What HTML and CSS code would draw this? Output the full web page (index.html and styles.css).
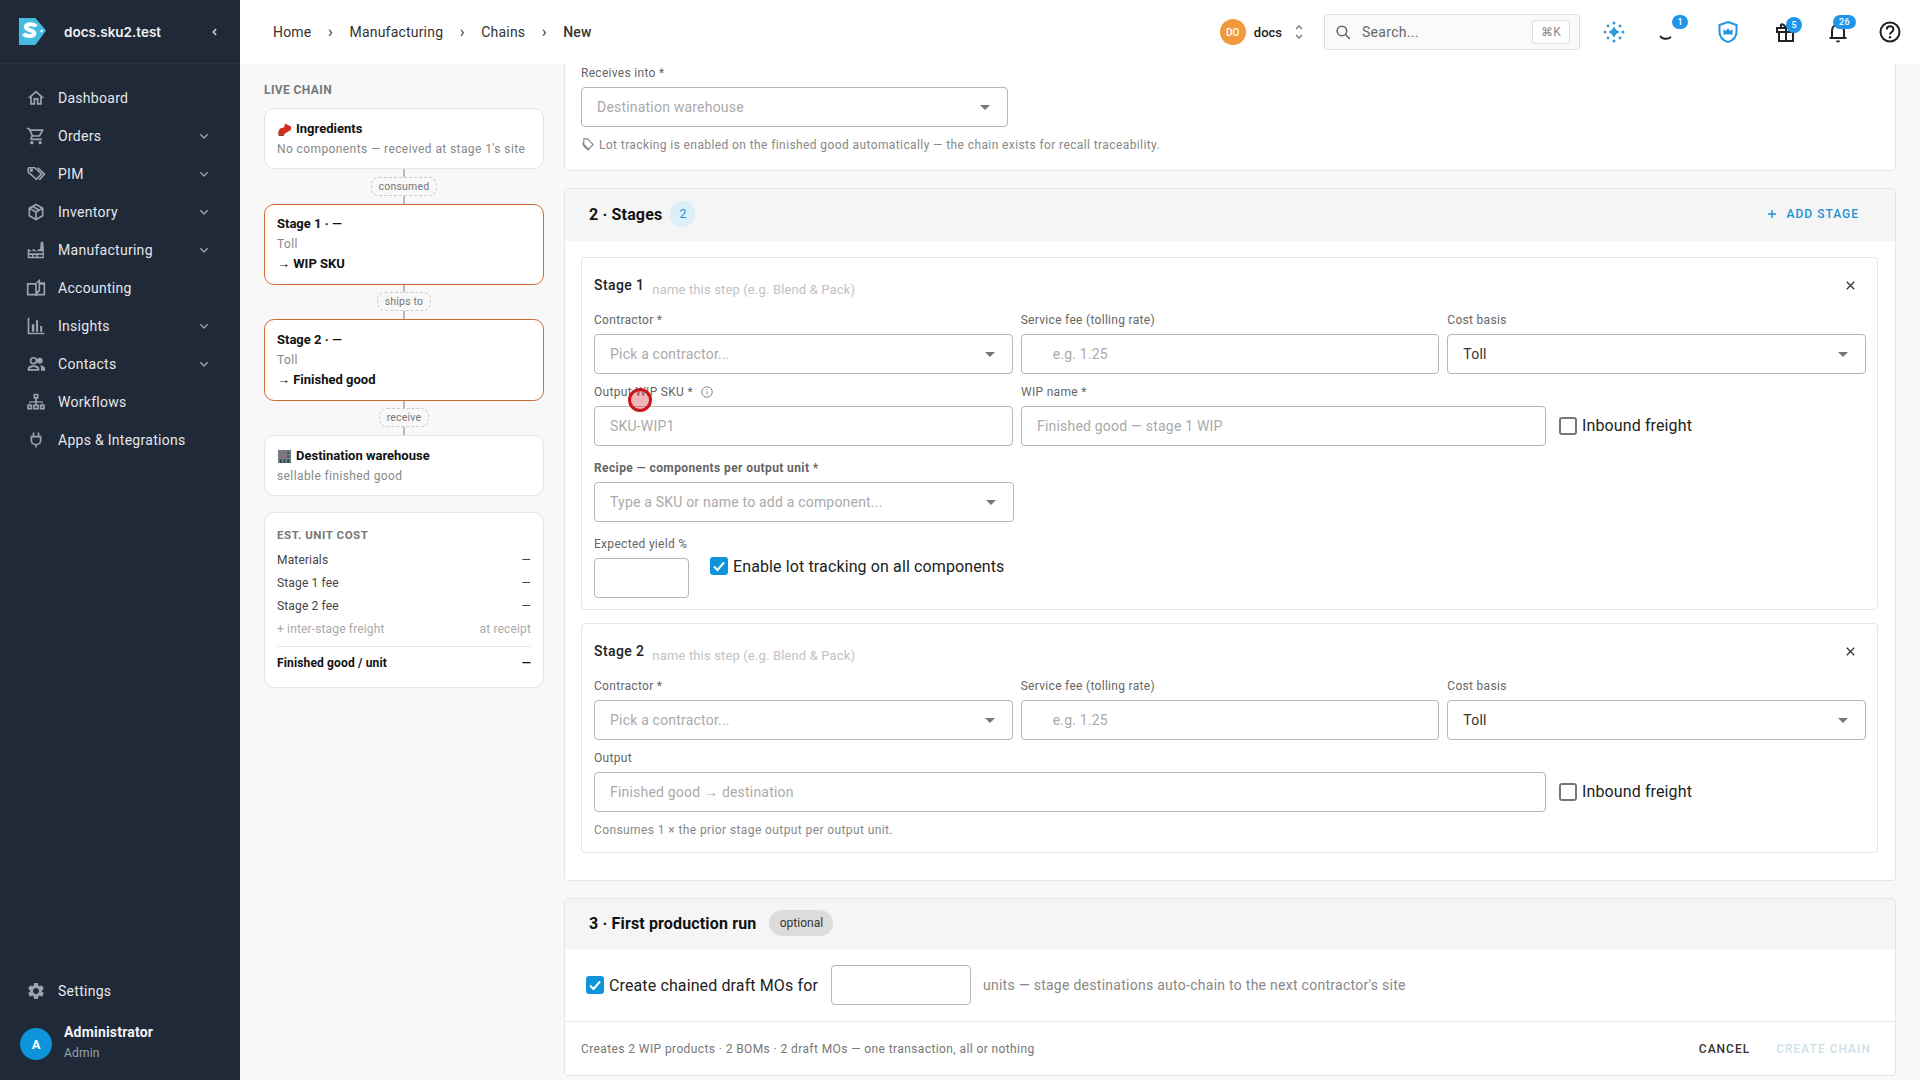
FILE: index.html
```html
<!DOCTYPE html>
<html>

<head>
    <meta charset="utf-8">
    <title>New Chain</title>
    <link rel="stylesheet" href="styles.css">
</head>

<body>
    <svg class="defs" width="0" height="0">
        <symbol id="chev" viewBox="0 0 24 24"><path d="M6.5 9.5l5.500 5.500 5.500-5.500" fill="none" stroke="currentColor" stroke-width="2"/></symbol>
        <symbol id="caret" viewBox="0 0 24 24"><path d="M7 10l5 5 5-5z" fill="currentColor"/></symbol>
    </svg>
    <div class="app">
        <aside class="sidebar">
            <div class="brand">
                <svg class="logo" viewBox="0 0 30 30">
                    <path d="M1 1h17l11 13-11 15H1z" fill="#45bbe0"/>
                    <circle cx="24.500" cy="14.500" r="1.300" fill="#fff"/>
                    <path d="M18.500 10c-1.500-3-9.500-3.500-10.500 0s9.500 3.500 9 7c-.5 3.500-9 3.500-11 0" fill="none" stroke="#fff" stroke-width="4.200"/>
                </svg>
                <span class="brand_name">docs.sku2.test</span>
                <svg class="brand_back" viewBox="0 0 24 24"><path d="M14 7l-5 5 5 5" fill="none" stroke="currentColor" stroke-width="2.400"/></svg>
            </div>
            <nav class="nav">
                <a class="nav_item"><svg class="nav_icon" viewBox="0 0 24 24"><path d="M12 5.690l5 4.500V18h-2v-6H9v6H7v-7.810l5-4.500M12 3L2 12h3v8h6v-6h2v6h6v-8h3L12 3z"/></svg>Dashboard</a>
                <a class="nav_item"><svg class="nav_icon" viewBox="0 0 24 24"><path d="M15.550 13c.75 0 1.410-.41 1.750-1.030l3.580-6.490c.37-.66-.11-1.480-.87-1.480H5.210l-.94-2H1v2h2l3.600 7.590-1.350 2.440C4.520 15.370 5.480 17 7 17h12v-2H7l1.100-2h7.450zM6.160 6h12.150l-2.760 5H8.530L6.160 6zM7 18c-1.100 0-1.990.9-1.990 2S5.900 22 7 22s2-.9 2-2-.9-2-2-2zm10 0c-1.100 0-1.990.9-1.990 2s.89 2 1.990 2 2-.9 2-2-.9-2-2-2z"/></svg>Orders<svg class="nav_chev"><use href="#chev"/></svg></a>
                <a class="nav_item"><svg class="nav_icon line" viewBox="0 0 24 24"><path d="M2.500 6.500l1-2h7l8 7.500-6 6.500-9.500-8.500z"/><path d="M14 4.500l8 7.500-6 7"/><circle cx="6.500" cy="7.500" r="1"/></svg>PIM<svg class="nav_chev"><use href="#chev"/></svg></a>
                <a class="nav_item"><svg class="nav_icon line" viewBox="0 0 24 24"><path d="M12 3l8 4.500v9L12 21l-8-4.500v-9z"/><path d="M4 7.500l8 4.500 8-4.500M12 12v9M8 5.300l8 4.500"/></svg>Inventory<svg class="nav_chev"><use href="#chev"/></svg></a>
                <a class="nav_item"><svg class="nav_icon" viewBox="0 0 24 24"><path d="M2 22V10.500l6 3v-3l6 3V11h3l.7-9h3l.8 9v11zM4 14.500V16h16v-2.500H4zM4 18v2h3v-2zm5 0v2h3v-2zm5 0v2h3v-2zM17 18v2h3v-2z" fill-rule="evenodd"/></svg>Manufacturing<svg class="nav_chev"><use href="#chev"/></svg></a>
                <a class="nav_item"><svg class="nav_icon" viewBox="0 0 24 24"><path d="M1 6h9.500c.7 0 1.100.4 1.500.8V5.500L17 1v4h5.500c.3 0 .5.200.5.500V21h-9c-1 0-1.500.8-2 1-.5-.2-1-1-2-1H1zm2 2v11h8V9c0-.5-.5-1-1-1zm11-2.500l-1 1V16l2-1.700V5.500zm3 2.500v7.500L13.500 19H21V8z" fill-rule="evenodd"/></svg>Accounting</a>
                <a class="nav_item"><svg class="nav_icon" viewBox="0 0 24 24"><path d="M2 2h2v18h18v2H2zM7 10h3v9H7zM12 5h2.500v14H12zM17 12h2.500v7H17z"/></svg>Insights<svg class="nav_chev"><use href="#chev"/></svg></a>
                <a class="nav_item"><svg class="nav_icon" viewBox="0 0 24 24"><circle cx="9" cy="8" r="3.500" fill="none" stroke="currentColor" stroke-width="2"/><circle cx="16.500" cy="8" r="3.500"/><path d="M2 20v-2.500c0-2.500 3.500-4 7-4s7 1.500 7 4V20zm2-2h10c-.3-1-2.500-2.500-5-2.500s-4.700 1.500-5 2.500zM17 13.500c3 .2 6 1.500 6 4V20h-5v-3c0-1.500-.5-2.500-1-3.500z" fill-rule="evenodd"/></svg>Contacts<svg class="nav_chev"><use href="#chev"/></svg></a>
                <a class="nav_item"><svg class="nav_icon" viewBox="0 0 24 24"><path d="M9 2h6v6h-2v3h7v4h2.500v6h-6v-6H19v-2.500h-6V15h2.500v6h-7v-6H11v-2.500H5V15h2.500v6h-6v-6H4v-4h7V8H9zm2 2v2h2V4zM3.500 17v2h2v-2zm7 0v2h3v-2zm8 0v2h2v-2z" fill-rule="evenodd"/></svg>Workflows</a>
                <a class="nav_item"><svg class="nav_icon line" viewBox="0 0 24 24"><path d="M9 3v5M15 3v5M6.500 8h11v4.500c0 3-2.500 5-5.500 5s-5.500-2-5.500-5zM12 17.500V21"/></svg>Apps &amp; Integrations</a>
            </nav>
            <a class="nav_item nav_settings"><svg class="nav_icon" viewBox="0 0 24 24"><path d="M19.140 12.940c.04-.3.06-.61.06-.94 0-.32-.02-.64-.07-.94l2.030-1.580c.18-.14.23-.41.12-.61l-1.920-3.320c-.12-.22-.37-.29-.59-.22l-2.390.96c-.5-.38-1.030-.7-1.620-.94l-.36-2.540c-.04-.24-.24-.41-.48-.41h-3.840c-.24 0-.43.17-.47.41l-.36 2.540c-.59.24-1.130.57-1.620.94l-2.390-.96c-.22-.08-.47 0-.59.22L2.740 8.870c-.12.21-.08.47.12.61l2.030 1.580c-.05.3-.09.63-.09.94s.02.64.07.94l-2.030 1.580c-.18.14-.23.41-.12.61l1.920 3.320c.12.22.37.29.59.22l2.390-.96c.5.38 1.030.7 1.620.94l.36 2.540c.05.24.24.41.48.41h3.840c.24 0 .44-.17.47-.41l.36-2.540c.59-.24 1.130-.56 1.620-.94l2.390.96c.22.08.47 0 .59-.22l1.920-3.320c.12-.22.07-.47-.12-.61l-2.010-1.580zM12 15.600c-1.980 0-3.600-1.620-3.600-3.600s1.620-3.600 3.600-3.600 3.600 1.620 3.600 3.600-1.620 3.600-3.600 3.600z"/></svg>Settings</a>
            <div class="user">
                <span class="user_avatar">A</span>
                <div>
                    <div class="user_name">Administrator</div>
                    <div class="user_role">Admin</div>
                </div>
            </div>
        </aside>

        <div class="page">
            <header class="topbar">
                <div class="crumbs">
                    <span>Home</span><i>›</i><span>Manufacturing</span><i>›</i><span>Chains</span><i>›</i><span class="crumb_now">New</span>
                </div>
                <div class="tenant">
                    <span class="tenant_avatar">DO</span>
                    <span class="tenant_name">docs</span>
                    <svg class="tenant_arrows" viewBox="0 0 12 20"><path d="M3 7l3-3 3 3M3 13l3 3 3-3" fill="none" stroke="currentColor" stroke-width="1.300"/></svg>
                </div>
                <div class="search">
                    <svg class="search_icon" viewBox="0 0 24 24"><circle cx="10" cy="10" r="6" fill="none" stroke="currentColor" stroke-width="2"/><path d="M14.500 14.500L20 20" stroke="currentColor" stroke-width="2"/></svg>
                    <span class="search_text">Search...</span>
                    <span class="search_key">⌘K</span>
                </div>
                <div class="tools">
                    <span class="tool">
                        <svg viewBox="0 0 24 24" fill="#2f9bdc"><path d="M12 6.500l2.200 3.300 3.300 2.200-3.300 2.200-2.200 3.300-2.200-3.300L6.500 12l3.300-2.200z"/><circle cx="12" cy="3" r="1.500"/><circle cx="12" cy="21" r="1.500"/><circle cx="3" cy="12" r="1.500"/><circle cx="21" cy="12" r="1.500"/><circle cx="6" cy="6" r="1.400"/><circle cx="18" cy="6" r="1.400"/><circle cx="6" cy="18" r="1.400"/><circle cx="18" cy="18" r="1.400"/></svg>
                    </span>
                    <span class="tool">
                        <svg viewBox="0 0 24 24"><path d="M6 16c2 3 7 4 11 1" fill="none" stroke="#222" stroke-width="2"/></svg>
                        <b class="badge">1</b>
                    </span>
                    <span class="tool">
                        <svg viewBox="0 0 24 24"><path d="M12 2l8.500 3v6.500c0 5-3.500 9-8.500 10.500-5-1.500-8.500-5.500-8.500-10.500V5z" fill="none" stroke="#2196e0" stroke-width="2"/><path d="M7.500 9l2.500 2 2-3 2 3 2.500-2v5.500h-9z" fill="#2196e0"/></svg>
                    </span>
                    <span class="tool">
                        <svg viewBox="0 0 24 24" fill="none" stroke="#222" stroke-width="2"><path d="M3 8h18v4H3zM5 12v9h14v-9M12 8v13M8 8C5 5 8 1.500 12 8c4-6.500 7-3 4 0"/></svg>
                        <b class="badge badge_gift">5</b>
                    </span>
                    <span class="tool">
                        <svg viewBox="0 0 24 24"><path d="M6 18v-7c0-4 2.500-6.500 6-6.500s6 2.500 6 6.500v7M3.500 18h17" fill="none" stroke="#222" stroke-width="2"/><path d="M10 20.500h4a2 2 0 0 1-4 0z" fill="#222"/></svg>
                        <b class="badge badge_wide">26</b>
                    </span>
                    <span class="tool">
                        <svg viewBox="0 0 24 24"><circle cx="12" cy="12" r="9.500" fill="none" stroke="#222" stroke-width="2"/><path d="M8.800 9.500c0-4.200 6.600-4.200 6.600 0 0 2.500-3.400 2.500-3.400 5" fill="none" stroke="#222" stroke-width="2"/><circle cx="12" cy="17.300" r="1.200" fill="#222"/></svg>
                    </span>
                </div>
            </header>

            <div class="content">
                <div class="chain">
                    <h4 class="chain_title">LIVE CHAIN</h4>
                    <div class="node">
                        <div class="node_head">
                            <svg class="emoji" viewBox="0 0 16 16"><path d="M1 11.500l2-4.500 4-1 2-4.500 6 3.500c.5 1.500 0 3-1 4l-6 3.500H3z" fill="#d4301f"/><path d="M1 12h7.500L7 15H2z" fill="#a33a30"/></svg>
                            Ingredients
                        </div>
                        <div class="node_sub">No components — received at stage 1's site</div>
                    </div>
                    <div class="link"><span>consumed</span></div>
                    <div class="node node_stage">
                        <div class="node_head">Stage 1 · —</div>
                        <div class="node_sub">Toll</div>
                        <div class="node_head">→ WIP SKU</div>
                    </div>
                    <div class="link link_short"><span>ships to</span></div>
                    <div class="node node_stage">
                        <div class="node_head">Stage 2 · —</div>
                        <div class="node_sub">Toll</div>
                        <div class="node_head">→ Finished good</div>
                    </div>
                    <div class="link link_short"><span>receive</span></div>
                    <div class="node">
                        <div class="node_head">
                            <svg class="emoji" viewBox="0 0 16 16"><path d="M1 1h14v14H1z" fill="#6f8088"/><path d="M3 3h2v2H3zM7 3h2v2H7zM3 7h2v2H3zM7 7h2v2H7z" fill="#c8506a"/><path d="M11 3h2v2h-2zM11 7h2v2h-2zM3 11h2v4H3zM7 11h2v4H7zM11 11h2v4h-2z" fill="#33424a"/></svg>
                            Destination warehouse
                        </div>
                        <div class="node_sub">sellable finished good</div>
                    </div>
                    <div class="cost">
                        <div class="cost_title">EST. UNIT COST</div>
                        <div class="cost_row"><span>Materials</span><span>—</span></div>
                        <div class="cost_row"><span>Stage 1 fee</span><span>—</span></div>
                        <div class="cost_row"><span>Stage 2 fee</span><span>—</span></div>
                        <div class="cost_row cost_muted"><span>+ inter-stage freight</span><span>at receipt</span></div>
                        <div class="cost_row cost_total"><span>Finished good / unit</span><span>—</span></div>
                    </div>
                </div>

                <div class="form">
                    <section class="card card_cut">
                        <label class="label">Receives into *</label>
                        <div class="input select_short"><span>Destination warehouse</span><svg class="caret"><use href="#caret"/></svg></div>
                        <div class="hint hint_lot">
                            <svg class="hint_icon" viewBox="0 0 16 16"><path d="M3 2h4l6 6-5 5-5-5zM2 5.500c0 4 3 7 7 8.500" fill="none" stroke="currentColor" stroke-width="1.200"/></svg>
                            Lot tracking is enabled on the finished good automatically — the chain exists for recall traceability.
                        </div>
                    </section>

                    <section class="card">
                        <div class="card_head">
                            <h3>2 · Stages</h3>
                            <span class="pill pill_blue">2</span>
                            <a class="add_stage"><svg viewBox="0 0 24 24"><path d="M12 5v14M5 12h14" stroke="currentColor" stroke-width="2.400"/></svg>ADD STAGE</a>
                        </div>
                        <div class="stages">
                            <div class="stage">
                                <div class="stage_head">
                                    <span class="stage_name">Stage 1</span>
                                    <span class="stage_hint">name this step (e.g. Blend &amp; Pack)</span>
                                    <svg class="stage_close" viewBox="0 0 24 24"><path d="M6 6l12 12M18 6L6 18" stroke="currentColor" stroke-width="2"/></svg>
                                </div>
                                <div class="row_three">
                                    <div><label class="label">Contractor *</label><div class="input"><span>Pick a contractor...</span><svg class="caret"><use href="#caret"/></svg></div></div>
                                    <div><label class="label">Service fee (tolling rate)</label><div class="input input_fee"><span>e.g. 1.25</span></div></div>
                                    <div><label class="label">Cost basis</label><div class="input input_value"><span>Toll</span><svg class="caret"><use href="#caret"/></svg></div></div>
                                </div>
                                <div class="row_wip">
                                    <div>
                                        <label class="label">Output WIP SKU * <svg class="info" viewBox="0 0 16 16"><circle cx="8" cy="8" r="6" fill="none" stroke="currentColor"/><path d="M8 7v4M8 4.500v1.200" stroke="currentColor"/></svg></label>
                                        <div class="input"><span>SKU-WIP1</span></div>
                                    </div>
                                    <div><label class="label">WIP name *</label><div class="input"><span>Finished good — stage 1 WIP</span></div></div>
                                    <div class="check check_free"><span class="box"></span>Inbound freight</div>
                                </div>
                                <label class="label label_bold">Recipe — components per output unit *</label>
                                <div class="input select_recipe"><span>Type a SKU or name to add a component...</span><svg class="caret"><use href="#caret"/></svg></div>
                                <div class="row_yield">
                                    <div><label class="label">Expected yield %</label><div class="input input_yield"></div></div>
                                    <div class="check"><span class="box box_on"><svg viewBox="0 0 18 18"><path d="M4 9.500l3.500 3.500L14 5.500" fill="none" stroke="#fff" stroke-width="2"/></svg></span>Enable lot tracking on all components</div>
                                </div>
                            </div>

                            <div class="stage">
                                <div class="stage_head">
                                    <span class="stage_name">Stage 2</span>
                                    <span class="stage_hint">name this step (e.g. Blend &amp; Pack)</span>
                                    <svg class="stage_close" viewBox="0 0 24 24"><path d="M6 6l12 12M18 6L6 18" stroke="currentColor" stroke-width="2"/></svg>
                                </div>
                                <div class="row_three">
                                    <div><label class="label">Contractor *</label><div class="input"><span>Pick a contractor...</span><svg class="caret"><use href="#caret"/></svg></div></div>
                                    <div><label class="label">Service fee (tolling rate)</label><div class="input input_fee"><span>e.g. 1.25</span></div></div>
                                    <div><label class="label">Cost basis</label><div class="input input_value"><span>Toll</span><svg class="caret"><use href="#caret"/></svg></div></div>
                                </div>
                                <div class="row_output">
                                    <div><label class="label">Output</label><div class="input"><span>Finished good → destination</span></div></div>
                                    <div class="check check_free"><span class="box"></span>Inbound freight</div>
                                </div>
                                <div class="hint hint_stage">Consumes 1 × the prior stage output per output unit.</div>
                            </div>
                        </div>
                    </section>

                    <section class="card">
                        <div class="card_head card_head_run">
                            <h3>3 · First production run</h3>
                            <span class="pill pill_grey">optional</span>
                        </div>
                        <div class="run">
                            <div class="check"><span class="box box_on"><svg viewBox="0 0 18 18"><path d="M4 9.500l3.500 3.500L14 5.500" fill="none" stroke="#fff" stroke-width="2"/></svg></span>Create chained draft MOs for</div>
                            <div class="input input_units"></div>
                            <span class="run_text">units — stage destinations auto-chain to the next contractor's site</span>
                        </div>
                        <div class="card_foot">
                            <span class="foot_text">Creates 2 WIP products · 2 BOMs · 2 draft MOs — one transaction, all or nothing</span>
                            <a class="btn">CANCEL</a>
                            <a class="btn btn_off">CREATE CHAIN</a>
                        </div>
                    </section>
                </div>
            </div>
        </div>
    </div>
    <div class="cursor"></div>
</body>

</html>
```
FILE: styles.css
```css
* {
    margin: 0;
    padding: 0;
    box-sizing: border-box;
}

html,
body {
    height: 100%;
    overflow: hidden;
}

body {
    font-family: Roboto, "Liberation Sans", sans-serif;
    font-size: 14px;
    color: #1c1c1c;
    background: #f8f8f8;
}

.defs {
    position: absolute;
}

.app {
    display: flex;
    height: 1080px;
}

/* sidebar */
.sidebar {
    width: 240px;
    flex: none;
    display: flex;
    flex-direction: column;
    background: #1f2937;
    color: #e5e7eb;
}

.brand {
    height: 64px;
    display: flex;
    align-items: center;
    padding-left: 18px;
    border-bottom: 1px solid #2a3442;
}

.logo {
    width: 29px;
    height: 29px;
}

.brand_name {
    margin-left: 17px;
    font-family: Inter, Roboto, sans-serif;
    font-size: 13.500px;
    font-weight: 600;
    color: #f0f2f4;
}

.brand_back {
    width: 14px;
    height: 14px;
    margin-left: 47px;
    color: #d5d8dc;
}

.nav {
    padding-top: 15px;
    flex: 1;
}

.nav_item {
    height: 38px;
    display: flex;
    align-items: center;
    padding-left: 26px;
    padding-right: 28px;
    font-size: 14px;
    letter-spacing: .28px;
    color: #e5e7eb;
}

.nav_icon {
    width: 20px;
    height: 20px;
    margin-right: 12px;
    fill: #9ca3af;
    color: #9ca3af;
    flex: none;
}

.nav_icon.line {
    fill: none;
    stroke: #9ca3af;
    stroke-width: 2;
}

.nav_chev {
    width: 16px;
    height: 16px;
    margin-left: auto;
    color: #9ca3af;
}

.nav_settings {
    margin-bottom: 4px;
}

.user {
    height: 66px;
    display: flex;
    align-items: flex-start;
    padding: 7px 20px 0;
}

.user_avatar {
    width: 32px;
    height: 32px;
    margin-top: 7px;
    margin-right: 12px;
    border-radius: 50%;
    background: #0e94da;
    color: #fff;
    font-weight: 700;
    font-size: 13px;
    display: flex;
    align-items: center;
    justify-content: center;
}

.user_name {
    font-weight: 700;
    font-size: 14px;
    letter-spacing: .2px;
    color: #f3f4f6;
    line-height: 22px;
}

.user_role {
    font-size: 12px;
    color: #9ca3af;
    line-height: 21px;
    letter-spacing: .2px;
}

/* top bar */
.page {
    flex: 1;
    min-width: 0;
    display: flex;
    flex-direction: column;
}

.topbar {
    height: 64px;
    flex: none;
    display: flex;
    align-items: center;
    background: #fff;
    padding-left: 33px;
}

.crumbs {
    display: flex;
    align-items: center;
    flex: 1;
    color: #333;
    font-size: 14px;
    letter-spacing: .2px;
}

.crumbs i {
    font-style: normal;
    font-size: 16px;
    width: 38px;
    text-align: center;
    padding-bottom: 2px;
}

.crumb_now {
    font-weight: 500;
}

.tenant {
    display: flex;
    align-items: center;
    margin-right: 19px;
}

.tenant_avatar {
    width: 26px;
    height: 26px;
    border-radius: 50%;
    background: #f0993a;
    color: #fff;
    font-size: 10px;
    font-weight: 500;
    display: flex;
    align-items: center;
    justify-content: center;
}

.tenant_name {
    margin-left: 8px;
    font-size: 13px;
    font-weight: 500;
}

.tenant_arrows {
    width: 12px;
    height: 20px;
    margin-left: 11px;
    color: #777;
}

.search {
    width: 256px;
    height: 36px;
    display: flex;
    align-items: center;
    border: 1px solid #ddd;
    border-radius: 3px;
    background: #fafafa;
    padding: 0 9px;
}

.search_icon {
    width: 19px;
    height: 19px;
    color: #666;
}

.search_text {
    margin-left: 9px;
    flex: 1;
    color: #666;
    letter-spacing: .3px;
}

.search_key {
    width: 38px;
    height: 24px;
    border: 1px solid #ddd;
    border-radius: 3px;
    background: #fff;
    color: #888;
    font-size: 12px;
    display: flex;
    align-items: center;
    justify-content: center;
}

.tools {
    display: flex;
    align-items: center;
    margin-left: 8px;
    margin-right: 4px;
}

.tool {
    position: relative;
    width: 52px;
    height: 40px;
    display: flex;
    align-items: center;
    justify-content: center;
}

.tool svg {
    width: 24px;
    height: 24px;
}

.tool:nth-child(2) {
    margin-right: 10px;
}

.tool:nth-child(3) {
    margin-right: 6px;
}

.badge {
    position: absolute;
    top: 3px;
    left: 32px;
    width: 16px;
    height: 14px;
    border-radius: 7px;
    background: #2196e8;
    color: #fff;
    font-size: 9px;
    font-weight: 500;
    line-height: 14px;
    text-align: center;
}

.badge_gift {
    top: 5px;
    left: 26px;
    height: 16px;
    line-height: 16px;
    border-radius: 8px;
}

.badge_wide {
    width: 23px;
    left: 21px;
    letter-spacing: .5px;
}

/* content */
.content {
    flex: 1;
    min-height: 0;
    display: flex;
    gap: 20px;
    padding: 0 24px;
    overflow: hidden;
}

.chain {
    width: 280px;
    flex: none;
}

.chain_title {
    font-size: 12px;
    font-weight: 700;
    color: #777;
    letter-spacing: .4px;
    line-height: 16px;
    margin-top: 18px;
    margin-bottom: 10px;
}

.node {
    height: 61px;
    background: #fff;
    border: 1px solid #e5e5e5;
    border-radius: 10px;
    padding: 10px 12px;
}

.node_stage {
    height: 81px;
    border-color: #cf6a34;
    padding: 9px 12px;
}

.link_short + .node_stage {
    height: 82px;
    padding-top: 10px;
}

.node_head {
    display: flex;
    align-items: center;
    gap: 4px;
    font-size: 13px;
    font-weight: 700;
    line-height: 20px;
    color: #111;
}

.node_sub {
    font-size: 12px;
    color: #888;
    line-height: 20px;
    letter-spacing: .4px;
}

.emoji {
    width: 15px;
    height: 15px;
}

.link {
    height: 35px;
    display: flex;
    align-items: center;
    justify-content: center;
    background: linear-gradient(#bbb, #bbb) center / 2px 100% no-repeat;
}

.link_short {
    height: 34px;
    padding-bottom: 1px;
}

.link span {
    height: 19px;
    padding: 0 7px;
    border: 1px dashed #ccc;
    border-radius: 8px;
    background: #f8f8f8;
    font-size: 10.500px;
    line-height: 17px;
    color: #777;
    letter-spacing: .2px;
}

.cost {
    height: 176px;
    margin-top: 16px;
    background: #fff;
    border: 1px solid #e5e5e5;
    border-radius: 10px;
    padding: 14px 12px;
}

.cost_title {
    font-size: 11.500px;
    font-weight: 700;
    color: #777;
    letter-spacing: .55px;
    line-height: 16px;
    margin-bottom: 6px;
}

.cost_row {
    display: flex;
    justify-content: space-between;
    font-size: 12px;
    line-height: 23px;
    color: #444;
    letter-spacing: .15px;
}

.cost_muted {
    color: #aaa;
    padding-bottom: 6px;
    border-bottom: 1px solid #e5e5e5;
    line-height: 22px;
}

.cost_total {
    font-weight: 700;
    color: #111;
    margin-top: 5px;
}

/* form cards */
.form {
    flex: 1;
    min-width: 0;
    display: flex;
    flex-direction: column;
    gap: 17px;
}

.card {
    background: #fff;
    border: 1px solid #e5e5e5;
    border-radius: 4px;
}

.card_cut {
    height: 107px;
    border-top: none;
    border-radius: 0 0 4px 4px;
    padding: 1px 16px 0;
}

.card_head {
    height: 52px;
    display: flex;
    align-items: center;
    padding: 0 36px 2px 24px;
    background: #f5f5f5;
}

.card_head_run {
    height: 50px;
}

.card_head h3 {
    font-size: 16px;
    font-weight: 700;
    letter-spacing: .15px;
    color: #111;
}

.pill {
    display: flex;
    align-items: center;
    justify-content: center;
    border-radius: 13px;
    height: 26px;
    font-size: 12px;
}

.pill_blue {
    width: 25px;
    margin-left: 8px;
    background: #dceef7;
    color: #1a94d4;
}

.pill_grey {
    width: 64px;
    margin-left: 13px;
    background: #dcdcdc;
    color: #333;
}

.add_stage {
    margin-left: auto;
    display: flex;
    align-items: center;
    gap: 8px;
    color: #1a94d4;
    font-size: 12px;
    font-weight: 500;
    letter-spacing: 1px;
}

.add_stage svg {
    width: 14px;
    height: 14px;
}

.label {
    display: flex;
    align-items: center;
    gap: 4px;
    height: 16px;
    margin-bottom: 6px;
    font-size: 12px;
    color: #666;
    letter-spacing: .3px;
    white-space: pre;
}

.label_bold {
    font-weight: 700;
    margin-top: 14px;
    letter-spacing: .4px;
}

.info {
    width: 14px;
    height: 14px;
    color: #777;
}

.input {
    height: 40px;
    display: flex;
    align-items: center;
    justify-content: space-between;
    padding: 0 10px 0 15px;
    background: #fff;
    border: 1px solid #b5b5b5;
    border-radius: 4px;
    color: #aaa;
    letter-spacing: .2px;
}

.caret {
    width: 24px;
    height: 24px;
    color: #777;
    flex: none;
}

.select_short {
    width: 427px;
}

.select_recipe {
    width: 420px;
}

.input_fee {
    padding-left: 31px;
}

.input_value {
    color: #333;
}

.input_yield {
    width: 95px;
}

.input_units {
    width: 140px;
    margin: 0 12px 0 13px;
}

.hint {
    font-size: 12px;
    color: #888;
    letter-spacing: .4px;
}

.hint_lot {
    display: flex;
    align-items: center;
    gap: 3px;
    margin-top: 10px;
}

.hint_icon {
    width: 15px;
    height: 15px;
}

.hint_stage {
    line-height: 16px;
    margin-top: 10px;
}

.stages {
    display: flex;
    flex-direction: column;
    gap: 13px;
    padding: 16px 17px 27px 16px;
}

.stage {
    border: 1px solid #e5e5e5;
    border-radius: 4px;
    padding: 15px 11px 11px 12px;
}

.stage:last-child {
    padding-bottom: 14px;
}

.stage_head {
    height: 24px;
    display: flex;
    align-items: center;
    margin-bottom: 15px;
}

.stage_name {
    font-size: 14px;
    font-weight: 500;
    color: #222;
    letter-spacing: .4px;
}

.stage_hint {
    margin-left: 8px;
    padding-top: 8px;
    font-size: 13px;
    color: #c2c2c2;
    letter-spacing: .15px;
}

.stage_close {
    width: 15px;
    height: 15px;
    margin-left: auto;
    margin-right: 8px;
    color: #333;
}

.row_three {
    display: grid;
    grid-template-columns: repeat(3, 1fr);
    gap: 8px;
    margin-bottom: 10px;
}

.row_wip {
    display: grid;
    grid-template-columns: 419px 525px auto;
    gap: 8px;
    align-items: end;
}

.row_output {
    display: grid;
    grid-template-columns: 952px auto;
    gap: 8px;
    align-items: end;
}

.row_yield {
    display: flex;
    align-items: flex-end;
    margin-top: 14px;
}

.row_yield .check {
    margin-left: 21px;
    height: 41px;
    align-items: flex-start;
}

.check {
    display: flex;
    align-items: center;
    gap: 5px;
    font-size: 16px;
    letter-spacing: .12px;
    color: #222;
}

.check_free {
    height: 40px;
    margin-left: 5px;
    padding-bottom: 1px;
}

.box {
    width: 18px;
    height: 18px;
    flex: none;
    border: 2px solid #777;
    border-radius: 3px;
}

.box_on {
    border: none;
    background: #0e94da;
}

.box svg {
    display: block;
    width: 18px;
    height: 18px;
}

.run {
    height: 73px;
    display: flex;
    align-items: center;
    padding-left: 21px;
    border-bottom: 1px solid #e8e8e8;
}

.run_text {
    color: #888;
    letter-spacing: .27px;
}

.card_foot {
    height: 53px;
    display: flex;
    align-items: center;
    padding: 0 24px 0 16px;
}

.foot_text {
    flex: 1;
    font-size: 12px;
    color: #777;
    letter-spacing: .4px;
}

.btn {
    font-size: 12px;
    font-weight: 500;
    letter-spacing: 1px;
    color: #333;
    margin-left: 26px;
}

.btn_off {
    color: #cfdfe9;
}

/* pointer marker from the recording */
.cursor {
    position: absolute;
    left: 628px;
    top: 388px;
    width: 24px;
    height: 24px;
    border-radius: 50%;
    border: 3px solid #c9141e;
    background: rgba(226, 70, 80, .4);
}
```
